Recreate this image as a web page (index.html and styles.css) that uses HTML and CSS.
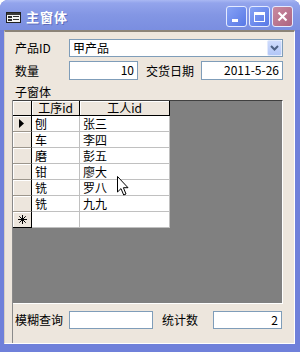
FILE: index.html
```html
<!DOCTYPE html>
<html lang="zh-CN">
<head>
    <meta charset="UTF-8">
    <meta name="viewport" content="width=device-width, initial-scale=1.0">
    <title>主窗体</title>
    <link rel="stylesheet" href="styles.css">
</head>
<body>
    <div class="window">
        <div class="titlebar">
            <svg class="app-icon" width="15" height="11" viewBox="0 0 15 11">
                <rect x="0.5" y="0.5" width="14" height="10" fill="#f4f4f4" stroke="#202020"/>
                <rect x="1" y="1" width="13" height="2" fill="#3a3a3a"/>
                <rect x="2" y="4" width="4" height="2" fill="#303030"/>
                <rect x="2" y="7" width="4" height="2" fill="#303030"/>
                <rect x="7" y="4" width="6" height="1" fill="#303030"/>
                <rect x="7" y="7" width="6" height="1" fill="#303030"/>
            </svg>
            <span class="title">主窗体</span>
            <div class="caption-buttons">
                <span class="cap-btn cap-min"><i></i></span>
                <span class="cap-btn cap-max"><i></i></span>
                <span class="cap-btn cap-close">
                    <svg width="11" height="11" viewBox="0 0 11 11">
                        <path d="M1.5 1.5 L9.5 9.5 M9.5 1.5 L1.5 9.5" stroke="#fff" stroke-width="2.2"/>
                    </svg>
                </span>
            </div>
        </div>

        <div class="client">
            <div class="field-row row-product">
                <span class="lbl">产品ID</span>
                <div class="combo">
                    <span class="combo-text">甲产品</span>
                    <span class="combo-btn">
                        <svg width="9" height="6" viewBox="0 0 9 6">
                            <path d="M1 1 L4.5 4.5 L8 1" fill="none" stroke="#4d6185" stroke-width="2"/>
                        </svg>
                    </span>
                </div>
            </div>

            <div class="field-row row-qty">
                <span class="lbl">数量</span>
                <div class="textbox num qty">10</div>
                <span class="lbl lbl-date">交货日期</span>
                <div class="textbox num date">2011-5-26</div>
            </div>

            <div class="sub-label">子窗体</div>

            <div class="lower">
                <div class="subform">
                    <div class="datasheet">
                        <div class="sel-head"></div>
                        <div class="col-head">工序id</div>
                        <div class="col-head">工人id</div>

                        <div class="sel">
                            <svg width="6" height="9" viewBox="0 0 6 9"><path d="M0 0 L5 4.5 L0 9 Z" fill="#000"/></svg>
                        </div>
                        <div class="cell">刨</div>
                        <div class="cell">张三</div>

                        <div class="sel"></div>
                        <div class="cell">车</div>
                        <div class="cell">李四</div>

                        <div class="sel"></div>
                        <div class="cell">磨</div>
                        <div class="cell">彭五</div>

                        <div class="sel"></div>
                        <div class="cell">钳</div>
                        <div class="cell">廖大</div>

                        <div class="sel"></div>
                        <div class="cell">铣</div>
                        <div class="cell">罗八</div>

                        <div class="sel"></div>
                        <div class="cell">铣</div>
                        <div class="cell">九九</div>

                        <div class="sel sel-new">
                            <svg width="9" height="9" viewBox="0 0 9 9">
                                <path d="M4.5 0 V9 M0 4.5 H9 M1.3 1.3 L7.7 7.7 M7.7 1.3 L1.3 7.7" stroke="#000" stroke-width="1"/>
                            </svg>
                        </div>
                        <div class="cell new"></div>
                        <div class="cell new"></div>
                    </div>

                    <svg class="cursor" width="12" height="20" viewBox="0 0 12 20">
                        <path d="M0.5 0.5 L0.5 16 L4 12.6 L6.7 19 L9 18 L6.4 11.7 L11 11.7 Z" fill="#fff" stroke="#000" stroke-width="1"/>
                    </svg>
                </div>

                <div class="field-row row-bottom">
                    <span class="lbl">模糊查询</span>
                    <div class="textbox search"></div>
                    <span class="lbl lbl-count">统计数</span>
                    <div class="textbox num count">2</div>
                </div>
            </div>
        </div>
    </div>
</body>
</html>
```

FILE: styles.css
```css
body {
    margin: 0;
    background-color: #fff;
    font-family: "Noto Sans CJK SC", "DejaVu Sans", sans-serif;
    font-size: 12px;
    color: #000;
}

.window {
    width: 300px;
    height: 352px;
    box-sizing: border-box;
    display: flex;
    flex-direction: column;
    background-color: #6f80da;
    border-radius: 8px 8px 0 0;
    overflow: hidden;
}

/* title bar */

.titlebar {
    height: 30px;
    flex-shrink: 0;
    display: flex;
    align-items: center;
    padding-left: 6px;
    background: linear-gradient(#a9b8f3 0, #93a4ec 3px, #8396e4 50%, #7a8ee0 100%);
}

.app-icon {
    margin-top: 4px;
    flex-shrink: 0;
}

.title {
    margin-left: 5px;
    margin-top: 2px;
    color: #fff;
    font-weight: bold;
    font-size: 13px;
    letter-spacing: 1px;
    text-shadow: 1px 1px 0 rgba(60, 70, 150, 0.5);
}

.caption-buttons {
    margin-left: auto;
    margin-top: 3px;
    padding-right: 7px;
    display: flex;
    gap: 2px;
}

.cap-btn {
    width: 21px;
    height: 21px;
    box-sizing: border-box;
    border: 1px solid #e4eaff;
    border-radius: 3px;
    background: linear-gradient(135deg, #86a2f5, #5878e6);
    position: relative;
    display: flex;
    align-items: center;
    justify-content: center;
}

.cap-min i {
    position: absolute;
    left: 5px;
    top: 12px;
    width: 6px;
    height: 3px;
    background-color: #fff;
}

.cap-max i {
    width: 11px;
    height: 10px;
    box-sizing: border-box;
    border: 1px solid #fff;
    border-top-width: 3px;
}

.cap-close {
    background: linear-gradient(135deg, #c98aa0, #ad6480);
}

/* client area */

.client {
    flex: 1;
    margin: 0 5px 8px 4px;
    display: flex;
    flex-direction: column;
    background-color: #ede6dd;
    border-top: 2px solid #8c8478;
    border-left: 1px solid #d6cec4;
    border-right: 1px solid #fff;
    border-bottom: 1px solid #fff;
}

.field-row {
    display: flex;
    align-items: center;
    margin-left: 10px;
}

.row-product {
    margin-top: 7px;
    height: 18px;
}

.row-qty {
    margin-top: 4px;
    height: 19px;
}

.lbl {
    width: 54px;
    flex-shrink: 0;
    line-height: 14px;
    white-space: nowrap;
}

.lbl-date {
    width: 55px;
    margin-left: 8px;
}

.combo {
    width: 214px;
    height: 18px;
    box-sizing: border-box;
    border: 1px solid #7f9db9;
    background-color: #fff;
    display: flex;
    align-items: center;
}

.combo-text {
    flex: 1;
    padding-left: 3px;
    line-height: 16px;
}

.combo-btn {
    width: 15px;
    height: 16px;
    box-sizing: border-box;
    border: 1px solid #e2eafc;
    border-radius: 2px;
    background: linear-gradient(#cfdcfd, #b3c7f7);
    display: flex;
    align-items: center;
    justify-content: center;
}

.textbox {
    height: 100%;
    box-sizing: border-box;
    border: 1px solid #7f9db9;
    background-color: #fff;
    padding: 0 3px;
    line-height: 16px;
}

.num {
    text-align: right;
}

.qty {
    width: 69px;
}

.date {
    width: 82px;
}

.sub-label {
    margin: 5px 0 0 10px;
    height: 14px;
    line-height: 14px;
}

/* subform + bottom area */

.lower {
    flex: 1;
    margin: 1px 0 0 7px;
    border-left: 1px solid #8a8a8a;
    display: flex;
    flex-direction: column;
}

.subform {
    position: relative;
    width: 270px;
    height: 204px;
    box-sizing: border-box;
    background-color: #808080;
    border-top: 1px solid #404040;
    border-right: 1px solid #fff;
    border-bottom: 1px solid #fff;
}

.datasheet {
    display: grid;
    grid-template-columns: 19px 48px 90px;
    grid-template-rows: 15px repeat(7, 16px);
    width: 157px;
}

.datasheet > div {
    box-sizing: border-box;
}

.sel-head,
.col-head {
    background-color: #ede6dd;
    border-right: 1px solid #000;
    border-bottom: 1px solid #000;
    box-shadow: inset 1px 1px 0 #fff;
}

.col-head {
    text-align: center;
    line-height: 14px;
}

.sel {
    background-color: #ede6dd;
    border-right: 1px solid #000;
    border-bottom: 1px solid #9c968c;
    box-shadow: inset 1px 1px 0 #fff;
    display: flex;
    align-items: center;
    justify-content: center;
}

.sel-new {
    border-bottom-color: #000;
}

.cell {
    background-color: #fff;
    border-right: 1px solid #c0c0c0;
    border-bottom: 1px solid #c0c0c0;
    padding-left: 3px;
    line-height: 15px;
}

.cursor {
    position: absolute;
    left: 104px;
    top: 75px;
}

.row-bottom {
    margin: 7px 0 0 2px;
    height: 18px;
}

.search {
    width: 84px;
}

.lbl-count {
    width: 51px;
    margin-left: 9px;
}

.count {
    width: 69px;
}
```
